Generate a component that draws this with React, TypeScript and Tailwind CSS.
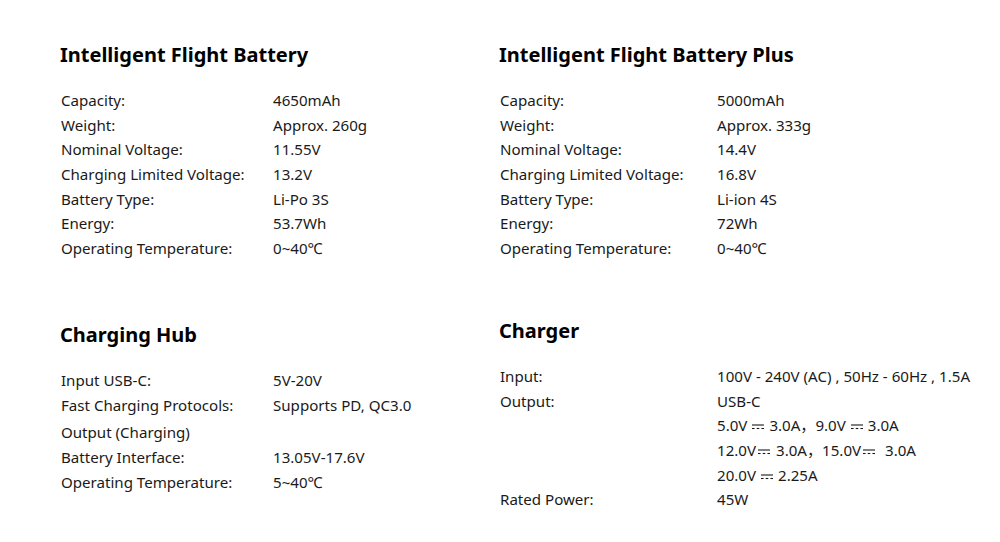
import type { ReactNode } from 'react'

type Row = { label: string; value?: ReactNode; className?: string }

function Dc({ tight }: { tight?: boolean }) {
  // the "direct current" mark: solid bar over a dashed bar
  return (
    <svg
      width="12"
      height="6"
      viewBox="0 0 12 6"
      className={`${tight ? 'ml-[2px] mr-[6px]' : 'mx-[5px]'} inline-block align-middle`}
      aria-hidden="true"
    >
      <line x1="0" y1="1" x2="12" y2="1" stroke="#1a1a1a" strokeWidth="1.1" />
      <line x1="0" y1="4.5" x2="2.6" y2="4.5" stroke="#1a1a1a" strokeWidth="1.1" />
      <line x1="4.7" y1="4.5" x2="7.3" y2="4.5" stroke="#1a1a1a" strokeWidth="1.1" />
      <line x1="9.4" y1="4.5" x2="12" y2="4.5" stroke="#1a1a1a" strokeWidth="1.1" />
    </svg>
  )
}

function Spec({ title, rows, labelWidth }: { title: string; rows: Row[]; labelWidth: string }) {
  return (
    <section>
      <h2 className="h-[30px] text-[20px] font-bold leading-[30px] text-black">{title}</h2>
      <div className="mt-[18px] flex flex-col pl-px">
        {rows.map((r, i) => (
          <div key={i} className={`flex h-[24.7px] items-center text-[15.1px] text-[#1a1a1a] ${r.className ?? ''}`}>
            <div className={`${labelWidth} shrink-0`}>{r.label}</div>
            <div className="whitespace-pre">{r.value}</div>
          </div>
        ))}
      </div>
    </section>
  )
}

const battery: Row[] = [
  { label: 'Capacity:', value: '4650mAh' },
  { label: 'Weight:', value: 'Approx. 260g' },
  { label: 'Nominal Voltage:', value: '11.55V' },
  { label: 'Charging Limited Voltage:', value: '13.2V' },
  { label: 'Battery Type:', value: 'Li-Po 3S' },
  { label: 'Energy:', value: '53.7Wh' },
  { label: 'Operating Temperature:', value: '0~40℃' },
]

const batteryPlus: Row[] = [
  { label: 'Capacity:', value: '5000mAh' },
  { label: 'Weight:', value: 'Approx. 333g' },
  { label: 'Nominal Voltage:', value: '14.4V' },
  { label: 'Charging Limited Voltage:', value: '16.8V' },
  { label: 'Battery Type:', value: 'Li-ion 4S' },
  { label: 'Energy:', value: '72Wh' },
  { label: 'Operating Temperature:', value: '0~40℃' },
]

const hub: Row[] = [
  { label: 'Input USB-C:', value: '5V-20V' },
  { label: 'Fast Charging Protocols:', value: 'Supports PD, QC3.0' },
  { label: 'Output (Charging)', className: 'mt-[3px]' },
  { label: 'Battery Interface:', value: '13.05V-17.6V' },
  { label: 'Operating Temperature:', value: '5~40℃' },
]

const charger: Row[] = [
  { label: 'Input:', value: '100V - 240V (AC) , 50Hz - 60Hz , 1.5A' },
  { label: 'Output:', value: 'USB-C' },
  {
    label: '',
    value: (
      <>
        5.0V<Dc />3.0A，9.0V<Dc />3.0A
      </>
    ),
  },
  {
    label: '',
    value: (
      <>
        12.0V<Dc tight />3.0A，15.0V<Dc tight /> 3.0A
      </>
    ),
  },
  {
    label: '',
    value: (
      <>
        20.0V<Dc />2.25A
      </>
    ),
  },
  { label: 'Rated Power:', value: '45W' },
]

export default function App() {
  return (
    <div
      className="h-[542px] w-[1000px] bg-white pl-[60px] pt-[40px]"
      style={{ fontFamily: '"Noto Sans", "Noto Sans CJK SC", sans-serif' }}
    >
      <div className="grid grid-cols-[439px_1fr]">
        <Spec title="Intelligent Flight Battery" rows={battery} labelWidth="w-[212px]" />
        <Spec title="Intelligent Flight Battery Plus" rows={batteryPlus} labelWidth="w-[217px]" />
        <div className="pt-[59px]">
          <Spec title="Charging Hub" rows={hub} labelWidth="w-[212px]" />
        </div>
        <div className="pt-[55px]">
          <Spec title="Charger" rows={charger} labelWidth="w-[217px]" />
        </div>
      </div>
    </div>
  )
}
